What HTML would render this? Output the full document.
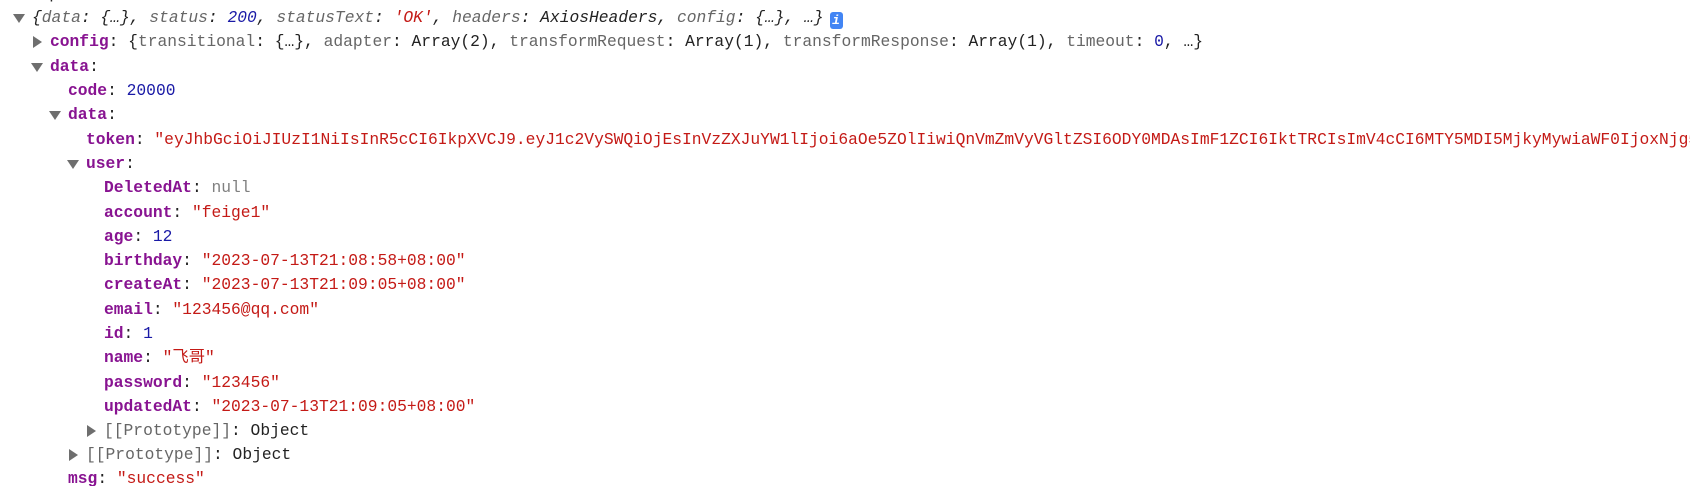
<!DOCTYPE html>
<html><head><meta charset="utf-8"><style>
html,body{margin:0;background:#fff;width:1690px;height:486px;overflow:hidden;}
body{font-family:"Liberation Mono","Noto Sans CJK SC",monospace;font-size:16.3px;position:relative;}
.r{position:absolute;left:0;right:0;height:24.3px;line-height:24.3px;white-space:nowrap;color:#222;overflow:hidden;}
.k{color:#881391;font-weight:bold}
.s{color:#c41a16}
.n{color:#1a1aa6}
.g{color:#666}
.nl{color:#808080}
.i{font-style:italic}
.t{position:absolute;width:0;height:0;top:8px}
.down{border-left:6px solid transparent;border-right:6px solid transparent;border-top:9px solid #6e6e6e;}
.right{border-top:6px solid transparent;border-bottom:6px solid transparent;border-left:9px solid #6e6e6e;top:6px}
.info{display:inline-block;width:13px;height:17px;background:#4285f4;border-radius:3px;color:#fff;font-size:13px;line-height:17px;text-align:center;vertical-align:-2px;font-style:italic;font-weight:bold;margin-left:6px}
</style></head><body>
<div class="r" style="top:0px;height:6px"><span style="position:absolute;left:20px;top:-18px">resp</span></div>
<div class="r" style="top:6px"><span class="t down" style="left:13px"></span><span class="i" style="position:absolute;left:32px">{<span class="g">data</span>: {…}, <span class="g">status</span>: <span class="n">200</span>, <span class="g">statusText</span>: <span class="s">'OK'</span>, <span class="g">headers</span>: AxiosHeaders, <span class="g">config</span>: {…}, …}<span class="info">i</span></span></div>
<div class="r" style="top:30px"><span class="t right" style="left:33px"></span><span style="position:absolute;left:50px"><span class="k">config</span>: {<span class="g">transitional</span>: {…}, <span class="g">adapter</span>: Array(2), <span class="g">transformRequest</span>: Array(1), <span class="g">transformResponse</span>: Array(1), <span class="g">timeout</span>: <span class="n">0</span>, …}</span></div>
<div class="r" style="top:55px"><span class="t down" style="left:31px"></span><span style="position:absolute;left:50px"><span class="k">data</span>:</span></div>
<div class="r" style="top:79px"><span style="position:absolute;left:68px"><span class="k">code</span>: <span class="n">20000</span></span></div>
<div class="r" style="top:103px"><span class="t down" style="left:49px"></span><span style="position:absolute;left:68px"><span class="k">data</span>:</span></div>
<div class="r" style="top:128px"><span style="position:absolute;left:86px"><span class="k">token</span>: <span class="s">"eyJhbGciOiJIUzI1NiIsInR5cCI6IkpXVCJ9.eyJ1c2VySWQiOjEsInVzZXJuYW1lIjoi6aOe5ZOlIiwiQnVmZmVyVGltZSI6ODY0MDAsImF1ZCI6IktTRCIsImV4cCI6MTY5MDI5MjkyMywiaWF0IjoxNjg5</span></span></div>
<div class="r" style="top:152px"><span class="t down" style="left:67px"></span><span style="position:absolute;left:86px"><span class="k">user</span>:</span></div>
<div class="r" style="top:176px"><span style="position:absolute;left:104px"><span class="k">DeletedAt</span>: <span class="nl">null</span></span></div>
<div class="r" style="top:201px"><span style="position:absolute;left:104px"><span class="k">account</span>: <span class="s">"feige1"</span></span></div>
<div class="r" style="top:225px"><span style="position:absolute;left:104px"><span class="k">age</span>: <span class="n">12</span></span></div>
<div class="r" style="top:249px"><span style="position:absolute;left:104px"><span class="k">birthday</span>: <span class="s">"2023-07-13T21:08:58+08:00"</span></span></div>
<div class="r" style="top:273px"><span style="position:absolute;left:104px"><span class="k">createAt</span>: <span class="s">"2023-07-13T21:09:05+08:00"</span></span></div>
<div class="r" style="top:298px"><span style="position:absolute;left:104px"><span class="k">email</span>: <span class="s">"123456@qq.com"</span></span></div>
<div class="r" style="top:322px"><span style="position:absolute;left:104px"><span class="k">id</span>: <span class="n">1</span></span></div>
<div class="r" style="top:346px"><span style="position:absolute;left:104px"><span class="k">name</span>: <span class="s">"飞哥"</span></span></div>
<div class="r" style="top:371px"><span style="position:absolute;left:104px"><span class="k">password</span>: <span class="s">"123456"</span></span></div>
<div class="r" style="top:395px"><span style="position:absolute;left:104px"><span class="k">updatedAt</span>: <span class="s">"2023-07-13T21:09:05+08:00"</span></span></div>
<div class="r" style="top:419px"><span class="t right" style="left:87px"></span><span style="position:absolute;left:104px"><span class="g">[[Prototype]]</span>: Object</span></div>
<div class="r" style="top:443px"><span class="t right" style="left:69px"></span><span style="position:absolute;left:86px"><span class="g">[[Prototype]]</span>: Object</span></div>
<div class="r" style="top:469px;height:17px;line-height:22px;overflow:visible"><span style="position:absolute;left:68px;top:-1px;line-height:22px"><span class="k">msg</span>: <span class="s">"success"</span></span></div>
</body></html>
